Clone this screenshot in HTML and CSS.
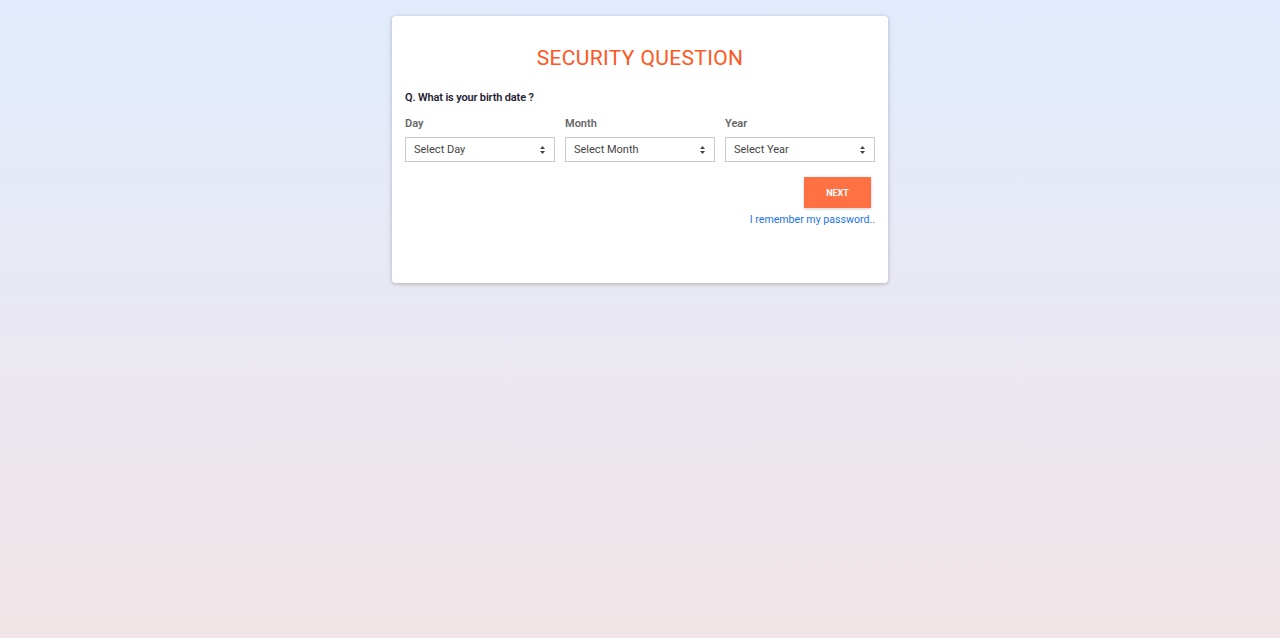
FILE: index.html
```html
<!DOCTYPE html>
<html>
<head>
<meta charset="utf-8">
<link rel="stylesheet" href="styles.css">
</head>
<body>
<div class="page">
  <div class="card">
    <h1 class="title">SECURITY QUESTION</h1>
    <p class="question">Q. What is your birth date ?</p>
    <div class="fields">
      <div class="field">
        <label class="label">Day</label>
        <div class="select"><span>Select Day</span><span class="arrows"><svg width="5" height="8" viewBox="0 0 5 8"><path d="M0 3L2.5 0L5 3Z M0 5L2.5 8L5 5Z" fill="#444"/></svg></span></div>
      </div>
      <div class="field">
        <label class="label">Month</label>
        <div class="select"><span>Select Month</span><span class="arrows"><svg width="5" height="8" viewBox="0 0 5 8"><path d="M0 3L2.5 0L5 3Z M0 5L2.5 8L5 5Z" fill="#444"/></svg></span></div>
      </div>
      <div class="field">
        <label class="label">Year</label>
        <div class="select"><span>Select Year</span><span class="arrows"><svg width="5" height="8" viewBox="0 0 5 8"><path d="M0 3L2.5 0L5 3Z M0 5L2.5 8L5 5Z" fill="#444"/></svg></span></div>
      </div>
    </div>
    <div class="actions">
      <button class="btn">NEXT</button>
      <a class="link" href="#">I remember my password..</a>
    </div>
  </div>
</div>
</body>
</html>
```
FILE: styles.css
```css
html, body {
  margin: 0;
  padding: 0;
  height: 100%;
}
body {
  background: linear-gradient(to bottom, #e1ebfd 0%, #f1e5e7 100%);
  font-family: Roboto, "Liberation Sans", sans-serif;
}
.page {
  display: flex;
  justify-content: center;
  padding-top: 16px;
}
.card {
  width: 496px;
  height: 267px;
  box-sizing: border-box;
  background: #fff;
  border-radius: 4px;
  box-shadow: 0 1px 4px rgba(0,0,0,0.25);
  padding: 29px 13px 0 13px;
}
.title {
  margin: 0;
  text-align: center;
  color: #ff5722;
  font-size: 21px;
  font-weight: 400;
  line-height: 26px;
  letter-spacing: 0.35px;
}
.question {
  margin: 20px 0 0 0;
  font-size: 11px;
  font-weight: 600;
  color: #1f2233;
  line-height: 14px;
  letter-spacing: -0.15px;
}
.fields {
  display: flex;
  gap: 10px;
  margin-top: 12px;
}
.field {
  display: flex;
  flex-direction: column;
  width: 150px;
}
.label {
  font-size: 11px;
  font-weight: 600;
  color: #666;
  line-height: 14px;
}
.select {
  margin-top: 6px;
  height: 25px;
  box-sizing: border-box;
  border: 1px solid #c9c9c9;
  display: flex;
  align-items: center;
  justify-content: space-between;
  padding: 0 9px 0 8px;
  font-size: 11px;
  font-weight: 400;
  color: #444;
}
.arrows {
  display: flex;
}
.actions {
  display: flex;
  flex-direction: column;
  align-items: flex-end;
  margin-top: 15px;
}
.btn {
  width: 67px;
  height: 31px;
  margin-right: 4px;
  border: none;
  background: #ff7043;
  color: #fff;
  font-family: inherit;
  font-size: 9px;
  font-weight: 700;
  box-shadow: 0 1px 3px rgba(0,0,0,0.2);
  padding: 0;
}
.link {
  margin-top: 5px;
  font-size: 10.6px;
  font-weight: 400;
  color: #1a73e8;
  text-decoration: none;
  line-height: 14px;
}
```
